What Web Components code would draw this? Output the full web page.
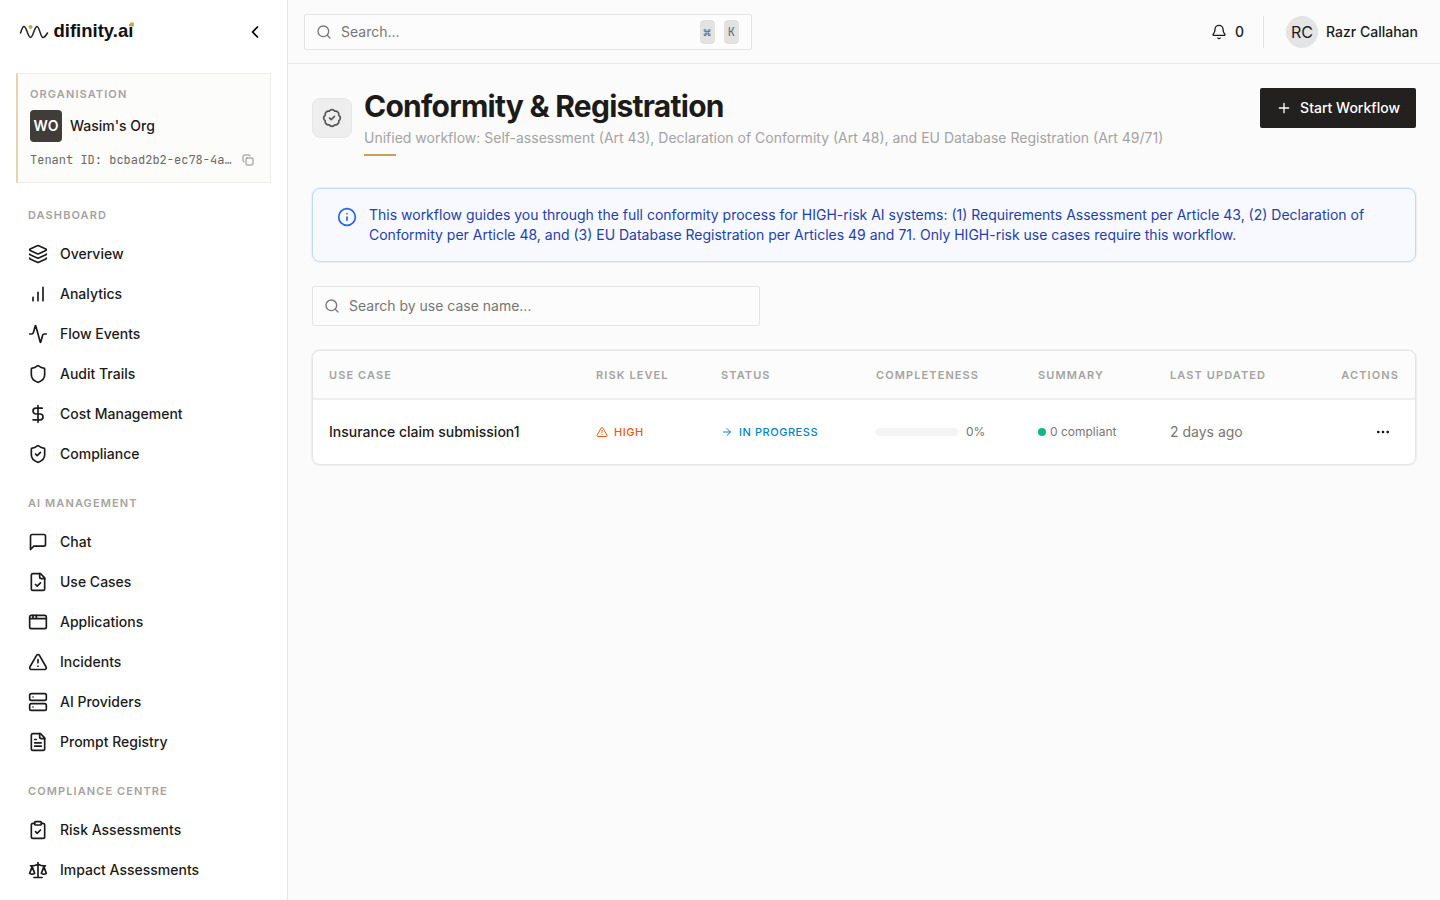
<!DOCTYPE html>
<html lang="en">
<head>
<meta charset="utf-8">
<meta name="viewport" content="width=device-width, initial-scale=1">
<title>Conformity &amp; Registration – difinity.ai</title>
<style>
:root{
  --ink:#1c1b1a; --muted:#787674; --faint:#a5a3a1; --line:#e5e5e5; --page:#fbfbfb; --gold:#c8a452;
  --mono:"JetBrains Mono","Liberation Mono",monospace;
}
body{margin:0;background:var(--page);color:var(--ink);font:400 14px/20px Inter,"Liberation Sans",sans-serif}
</style>
</head>
<body>
<df-app>
  <df-sidebar slot="sidebar">
    <df-org initials="WO" name="Wasim's Org" tenant="bcbad2b2-ec78-4a…"></df-org>
    <df-nav-group label="Dashboard">
      <df-nav-item icon="layers">Overview</df-nav-item>
      <df-nav-item icon="bars">Analytics</df-nav-item>
      <df-nav-item icon="activity">Flow Events</df-nav-item>
      <df-nav-item icon="shield">Audit Trails</df-nav-item>
      <df-nav-item icon="dollar">Cost Management</df-nav-item>
      <df-nav-item icon="shield-check">Compliance</df-nav-item>
    </df-nav-group>
    <df-nav-group label="AI Management">
      <df-nav-item icon="chat">Chat</df-nav-item>
      <df-nav-item icon="file-check">Use Cases</df-nav-item>
      <df-nav-item icon="window">Applications</df-nav-item>
      <df-nav-item icon="triangle">Incidents</df-nav-item>
      <df-nav-item icon="server">AI Providers</df-nav-item>
      <df-nav-item icon="file-text">Prompt Registry</df-nav-item>
    </df-nav-group>
    <df-nav-group label="Compliance Centre">
      <df-nav-item icon="clipboard">Risk Assessments</df-nav-item>
      <df-nav-item icon="scale">Impact Assessments</df-nav-item>
    </df-nav-group>
  </df-sidebar>
  <df-topbar slot="topbar"></df-topbar>
  <df-page-header icon="badge">
    <span slot="title">Conformity &amp; Registration</span>
    <span slot="subtitle">Unified workflow: Self-assessment (Art 43), Declaration of Conformity (Art 48), and EU Database Registration (Art 49/71)</span>
    <df-button slot="action" icon="plus">Start Workflow</df-button>
  </df-page-header>
  <df-alert>This workflow guides you through the full conformity process for HIGH-risk AI systems: (1) Requirements Assessment per Article 43, (2) Declaration of Conformity per Article 48, and (3) EU Database Registration per Articles 49 and 71. Only HIGH-risk use cases require this workflow.</df-alert>
  <df-search size="large" placeholder="Search by use case name..."></df-search>
  <df-table></df-table>
</df-app>
<script>
const ICONS = {
  layers:'<path d="M12.83 2.18a2 2 0 0 0-1.66 0L2.6 6.08a1 1 0 0 0 0 1.83l8.58 3.91a2 2 0 0 0 1.66 0l8.58-3.9a1 1 0 0 0 0-1.83z"/><path d="M2 12a1 1 0 0 0 .58.91l8.6 3.91a2 2 0 0 0 1.65 0l8.58-3.9A1 1 0 0 0 22 12"/><path d="M2 17a1 1 0 0 0 .58.91l8.6 3.91a2 2 0 0 0 1.65 0l8.58-3.9A1 1 0 0 0 22 17"/>',
  bars:'<path d="M12 20V10M18 20V4M6 20v-4"/>',
  activity:'<path d="M22 12h-2.48a2 2 0 0 0-1.93 1.46l-2.35 8.36a.25.25 0 0 1-.48 0L9.24 2.18a.25.25 0 0 0-.48 0l-2.35 8.36A2 2 0 0 1 4.49 12H2"/>',
  shield:'<path d="M20 13c0 5-3.5 7.5-7.66 8.95a1 1 0 0 1-.67-.01C7.5 20.5 4 18 4 13V6a1 1 0 0 1 1-1c2 0 4.5-1.2 6.24-2.72a1.17 1.17 0 0 1 1.52 0C14.51 3.81 17 5 19 5a1 1 0 0 1 1 1z"/>',
  dollar:'<path d="M12 2v20M17 5H9.5a3.5 3.5 0 0 0 0 7h5a3.5 3.5 0 0 1 0 7H6"/>',
  chat:'<path d="M21 15a2 2 0 0 1-2 2H7l-4 4V5a2 2 0 0 1 2-2h14a2 2 0 0 1 2 2z"/>',
  'file-check':'<path d="M15 2H6a2 2 0 0 0-2 2v16a2 2 0 0 0 2 2h12a2 2 0 0 0 2-2V7z"/><path d="M14 2v4a2 2 0 0 0 2 2h4M9 15l2 2 4-4"/>',
  'file-text':'<path d="M15 2H6a2 2 0 0 0-2 2v16a2 2 0 0 0 2 2h12a2 2 0 0 0 2-2V7z"/><path d="M14 2v4a2 2 0 0 0 2 2h4M10 9H8M16 13H8M16 17H8"/>',
  window:'<rect x="2" y="4" width="20" height="16" rx="2"/><path d="M10 4v4M2 8h20M6 4v4"/>',
  triangle:'<path d="m21.73 18-8-14a2 2 0 0 0-3.48 0l-8 14A2 2 0 0 0 4 21h16a2 2 0 0 0 1.73-3M12 9v4M12 17h.01"/>',
  server:'<rect x="2" y="2" width="20" height="8" rx="2"/><rect x="2" y="14" width="20" height="8" rx="2"/><path d="M6 6h.01M6 18h.01"/>',
  clipboard:'<rect x="8" y="2" width="8" height="4" rx="1"/><path d="M16 4h2a2 2 0 0 1 2 2v14a2 2 0 0 1-2 2H6a2 2 0 0 1-2-2V6a2 2 0 0 1 2-2h2M9 14l2 2 4-4"/>',
  scale:'<path d="m16 16 3-8 3 8c-.87.65-1.92 1-3 1s-2.13-.35-3-1M2 16l3-8 3 8c-.87.65-1.92 1-3 1s-2.13-.35-3-1M7 21h10M12 3v18M3 7h2c2 0 5-1 7-2 2 1 5 2 7 2h2"/>',
  badge:'<path d="M3.85 8.62a4 4 0 0 1 4.78-4.77 4 4 0 0 1 6.74 0 4 4 0 0 1 4.78 4.78 4 4 0 0 1 0 6.74 4 4 0 0 1-4.77 4.78 4 4 0 0 1-6.75 0 4 4 0 0 1-4.78-4.77 4 4 0 0 1 0-6.76Z"/><path d="m9 12 2 2 4-4"/>',
  plus:'<path d="M5 12h14M12 5v14"/>',
  info:'<circle cx="12" cy="12" r="10"/><path d="M12 16v-4M12 8h.01"/>',
  search:'<circle cx="11" cy="11" r="8"/><path d="m21 21-4.3-4.3"/>',
  bell:'<path d="M10.27 21a2 2 0 0 0 3.46 0M3.26 15.33A1 1 0 0 0 4 17h16a1 1 0 0 0 .74-1.67C19.41 13.96 18 12.5 18 8A6 6 0 0 0 6 8c0 4.5-1.41 5.96-2.74 7.33"/>',
  left:'<path d="m15 18-6-6 6-6"/>',
  copy:'<rect x="8" y="8" width="14" height="14" rx="2"/><path d="M4 16c-1.1 0-2-.9-2-2V4c0-1.1.9-2 2-2h10c1.1 0 2 .9 2 2"/>',
  arrow:'<path d="M5 12h14M12 5l7 7-7 7"/>',
  more:'<g fill="currentColor"><circle cx="12" cy="12" r="1"/><circle cx="19" cy="12" r="1"/><circle cx="5" cy="12" r="1"/></g>'
};
ICONS['shield-check'] = ICONS.shield + '<path d="m9 12 2 2 4-4"/>';

function define(name, render){
  customElements.define(name, class extends HTMLElement{
    constructor(){ super(); this.attachShadow({mode:'open'}); }
    connectedCallback(){
      this.shadowRoot.innerHTML = '<style>:host{display:block;box-sizing:border-box}*{box-sizing:border-box}</style>' + render(this);
    }
  });
}

define('df-icon', el => `
<style>:host{display:block;flex:none;width:var(--size,20px);height:var(--size,20px)}svg{display:block;width:100%;height:100%}</style>
<svg viewBox="0 0 24 24" fill="none" stroke="currentColor" stroke-width="2" stroke-linecap="round" stroke-linejoin="round" aria-hidden="true">${ICONS[el.getAttribute('name')]}</svg>`);

define('df-app', () => `
<style>
:host{display:grid;grid-template-columns:288px minmax(0,1fr);min-height:100vh}
.content{display:flex;flex-direction:column;min-width:0}
main{display:flex;flex-direction:column;padding:24px}
</style>
<slot name="sidebar"></slot>
<div class="content"><slot name="topbar"></slot><main><slot></slot></main></div>`);

define('df-sidebar', () => `
<style>
:host{background:#fff;border-right:1px solid var(--line);position:sticky;top:0;height:100vh;overflow-y:auto;scrollbar-width:none}
header{display:flex;align-items:center;justify-content:space-between;height:64px;padding:0 20px}
a{display:block}
a svg{display:block;overflow:visible}
a text{font:700 37px "Liberation Sans",Arial,sans-serif;fill:#111}
button{display:grid;place-items:center;width:24px;height:24px;padding:0;border:0;background:none;color:#000}
nav{display:flex;flex-direction:column;padding:9px 16px 16px}
</style>
<header>
  <a href="#home" aria-label="difinity.ai home"><svg width="114" height="28" viewBox="0 0 228 56">
    <path d="M1 30C4 22 5 17 8 17C13 17 16 39 21 39C26 39 29 17 34 17C39 17 41 39 46 39C49 39 52 35 55 30" fill="none" stroke="#222" stroke-width="3" stroke-linecap="round"/>
    <circle cx="21" cy="18" r="4" fill="#d0a548"/>
    <text x="67" y="38">difinity.ai</text>
    <rect x="220" y="9" width="8" height="8" rx="2" fill="#d0a548"/>
  </svg></a>
  <button type="button" aria-label="Collapse sidebar"><df-icon name="left"></df-icon></button>
</header>
<nav aria-label="Main"><slot></slot></nav>`);

define('df-org', el => `
<style>
:host{padding:12px;margin-bottom:24px;border:1px solid #ececea;border-left:2px solid #e6d5ac;background:#fcfcfa}
.label{font-size:11px;line-height:16px;font-weight:600;letter-spacing:.1em;text-transform:uppercase;color:var(--faint)}
.org{display:flex;align-items:center;gap:8px;margin:8px 0;font-weight:500}
.avatar{display:grid;place-items:center;width:32px;height:32px;border-radius:4px;background:#403d38;color:#fff;font-weight:600}
.tenant{display:flex;align-items:center;justify-content:space-between;gap:8px;color:#6b6966;font:12px/20px var(--mono)}
.tenant span{white-space:nowrap}
button{border:0;background:none;padding:0 4px 0 0;color:#8a8a8a;--size:12px}
</style>
<div class="label">Organisation</div>
<div class="org"><span class="avatar">${el.getAttribute('initials')}</span><span>${el.getAttribute('name')}</span></div>
<div class="tenant"><span>Tenant ID: ${el.getAttribute('tenant')}</span><button type="button" aria-label="Copy tenant ID"><df-icon name="copy"></df-icon></button></div>`);

define('df-nav-group', el => `
<style>
:host{margin-bottom:21px}
h2{margin:0 0 11px;padding:0 12px;font-size:11px;line-height:16px;font-weight:600;letter-spacing:.1em;text-transform:uppercase;color:var(--faint)}
</style>
<h2>${el.getAttribute('label')}</h2><slot></slot>`);

define('df-nav-item', el => `
<style>
a{display:flex;align-items:center;gap:12px;height:40px;padding:0 12px;color:var(--ink);font-weight:500;text-decoration:none}
</style>
<a href="#${el.getAttribute('icon')}"><df-icon name="${el.getAttribute('icon')}"></df-icon><slot></slot></a>`);

define('df-search', el => `
<style>
:host{width:448px;max-width:100%}
:host([size=large]){margin-bottom:24px}
label{display:flex;align-items:center;gap:9px;height:36px;padding:0 12px 0 11px;border:1px solid var(--line);border-radius:2px;color:var(--muted);background:#fcfcfc;--size:16px}
:host([size=large]) label{height:40px}
input{flex:1;min-width:0;padding:0;border:0;outline:0;background:none;font:inherit;color:var(--ink)}
input::placeholder{color:var(--muted);opacity:1}
</style>
<label><df-icon name="search"></df-icon><input type="search" aria-label="${el.getAttribute('placeholder')}" placeholder="${el.getAttribute('placeholder')}"><slot></slot></label>`);

define('df-topbar', () => `
<style>
:host{display:flex;align-items:center;justify-content:space-between;height:64px;padding:0 22px 0 16px;border-bottom:1px solid var(--line);font-weight:500}
df-search{font-weight:400}
.keys{display:flex;gap:9px}
kbd{padding:0 4px;border-radius:4px;background:#e2e2e2;color:#6b6966;font:12px/24px var(--mono)}
.right,button{display:flex;align-items:center;gap:8px}
button{padding:0;border:0;background:none;font:inherit;color:inherit;--size:16px}
.sep{width:1px;height:32px;margin:0 14px 0 11px;background:var(--line)}
.avatar{display:grid;place-items:center;width:32px;height:32px;border-radius:50%;background:#e4e4e4;font-size:16px;font-weight:400}
</style>
<df-search placeholder="Search..."><span class="keys"><kbd>⌘</kbd><kbd>K</kbd></span></df-search>
<div class="right">
  <button type="button" aria-label="Notifications"><df-icon name="bell"></df-icon><span>0</span></button>
  <span class="sep"></span>
  <button type="button"><span class="avatar">RC</span><span>Razr Callahan</span></button>
</div>`);

define('df-page-header', el => `
<style>
:host{display:flex;align-items:flex-start;gap:12px;margin-bottom:32px}
.tile{flex:none;display:grid;place-items:center;width:40px;height:40px;margin-top:10px;border:1px solid #e6e6e6;border-radius:8px;background:#eee;color:#555}
.text{flex:1;min-width:0}
h1{margin:0 0 4px;font-size:30px;line-height:36px;font-weight:700;letter-spacing:-.025em}
p{margin:0;color:var(--faint)}
.rule{width:32px;height:2px;margin-top:6px;background:var(--gold)}
</style>
<div class="tile"><df-icon name="${el.getAttribute('icon')}"></df-icon></div>
<div class="text"><h1><slot name="title"></slot></h1><p><slot name="subtitle"></slot></p><div class="rule"></div></div>
<slot name="action"></slot>`);

define('df-button', el => `
<style>
button{display:flex;align-items:center;gap:8px;height:40px;padding:0 16px;border:0;border-radius:2px;background:#22211f;color:#fff;font:inherit;font-weight:500;--size:16px;white-space:nowrap}
</style>
<button type="button"><df-icon name="${el.getAttribute('icon')}"></df-icon><slot></slot></button>`);

define('df-alert', () => `
<style>
:host{display:flex;align-items:flex-start;gap:12px;margin-bottom:24px;padding:16px 24px;border:1px solid #bfdbfe;border-radius:8px;background:#f7f9fe;color:#1e40af;box-shadow:0 0 1px 1px #0000000d}
df-icon{color:#2563eb;margin-top:2px}
</style>
<df-icon name="info"></df-icon><div role="note"><slot></slot></div>`);

define('df-table', () => `
<style>
:host{border:1px solid var(--line);border-radius:8px;background:#fff;overflow:hidden;box-shadow:0 0 1px 1px #0000000d}
table{width:100%;table-layout:fixed;border-collapse:separate;border-spacing:0}
th,td{padding:0 16px;text-align:left;white-space:nowrap}
th{height:49px;border-bottom:2px solid #efefef;background:#fcfcfc;font-size:11px;line-height:16px;font-weight:600;letter-spacing:.1em;text-transform:uppercase;color:var(--faint)}
td{height:64px;color:var(--muted)}
th:last-child{text-align:right}
.name{color:var(--ink);font-weight:500}
.tag{display:flex;align-items:center;gap:6px;font-size:11px;line-height:16px;font-weight:500;letter-spacing:.05em;--size:12px}
.high{color:#ea580c}.progress{color:#0284c7}
.meter,.sum{display:flex;align-items:center;gap:8px;font-size:12px;line-height:16px}
.sum{gap:4px}
progress{appearance:none;width:82px;height:8px;border:0;border-radius:4px;overflow:hidden;background:#f4f4f3}
progress::-webkit-progress-bar{background:#f4f4f3}
progress::-webkit-progress-value{background:#10b981}
.dot{width:8px;height:8px;border-radius:50%;background:#10b981}
button{display:grid;place-items:center;width:32px;height:32px;margin-left:auto;padding:0;border:0;background:none;color:#111;--size:16px}
</style>
<table>
<colgroup><col style="width:267px"><col style="width:125px"><col style="width:155px"><col style="width:162px"><col style="width:132px"><col style="width:154px"><col style="width:107px"></colgroup>
<thead><tr><th>Use Case</th><th>Risk Level</th><th>Status</th><th>Completeness</th><th>Summary</th><th>Last Updated</th><th>Actions</th></tr></thead>
<tbody><tr>
<td class="name">Insurance claim submission1</td>
<td><span class="tag high"><df-icon name="triangle"></df-icon>HIGH</span></td>
<td><span class="tag progress"><df-icon name="arrow"></df-icon>IN PROGRESS</span></td>
<td><span class="meter"><progress max="100" value="0" aria-label="Completeness"></progress>0%</span></td>
<td><span class="sum"><i class="dot"></i>0 compliant</span></td>
<td>2 days ago</td>
<td><button type="button" aria-label="Row actions"><df-icon name="more"></df-icon></button></td>
</tr></tbody></table>`);
</script>
</body>
</html>
